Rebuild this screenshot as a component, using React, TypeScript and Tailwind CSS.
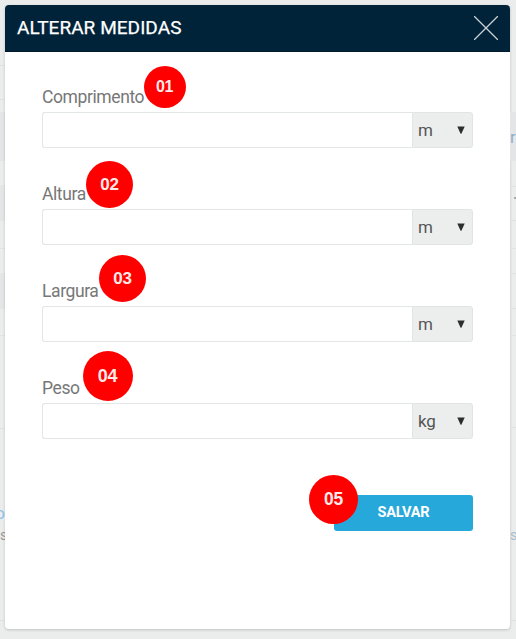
import React, { useState } from 'react';
import clsx from 'clsx';

interface Measure {
  id: string;
  label: string;
  unit: string;
  units: string[];
  step: string;
  badgeClass: string;
}

const LENGTH_UNITS = ['m', 'cm', 'mm'];
const WEIGHT_UNITS = ['kg', 'g'];

const measures: Measure[] = [
  { id: 'comprimento', label: 'Comprimento', unit: 'm', units: LENGTH_UNITS, step: '01', badgeClass: 'left-[101.5px] -top-[19.5px] size-[42px] text-[16px]' },
  { id: 'altura', label: 'Altura', unit: 'm', units: LENGTH_UNITS, step: '02', badgeClass: 'left-[44px] -top-[21px] size-[47px] text-[17px]' },
  { id: 'largura', label: 'Largura', unit: 'm', units: LENGTH_UNITS, step: '03', badgeClass: 'left-[57px] -top-[24px] size-[47px] text-[17px]' },
  { id: 'peso', label: 'Peso', unit: 'kg', units: WEIGHT_UNITS, step: '04', badgeClass: 'left-[40.5px] -top-[25.5px] size-[50px] text-[18px]' },
];

function StepBadge({ step, className }: { step: string; className: string }) {
  return (
    <span
      className={clsx(
        'absolute z-10 flex items-center justify-center rounded-full bg-[#fe0000] font-["Liberation_Sans",sans-serif] leading-none font-bold tracking-[-0.3px] text-[#ffe9e9]',
        className
      )}
    >
      {step}
    </span>
  );
}

function MeasureField({ measure }: { measure: Measure }) {
  const [value, setValue] = useState('');
  const [unit, setUnit] = useState(measure.unit);

  return (
    <div className="relative">
      <label htmlFor={measure.id} className="block h-[27px] text-[17.5px] leading-[25px] tracking-[-0.4px] text-[#777]">
        {measure.label}
      </label>
      <StepBadge step={measure.step} className={measure.badgeClass} />
      <div className="flex h-9">
        <input
          id={measure.id}
          value={value}
          onChange={e => setValue(e.target.value)}
          className="min-w-0 flex-1 rounded-l-[3px] border border-r-0 border-[#e2e6e6] bg-white px-2 text-[#555] outline-none"
        />
        <div className="relative w-[61px]">
          <select
            value={unit}
            onChange={e => setUnit(e.target.value)}
            className="h-full w-full appearance-none rounded-r-[3px] border border-[#e0e4e4] bg-[#eceeee] pt-px pl-[5px] text-[17px] tracking-[-0.2px] text-[#555] outline-none"
          >
            {measure.units.map(u => (
              <option key={u}>{u}</option>
            ))}
          </select>
          <svg viewBox="0 0 8 8" className="pointer-events-none absolute top-[14px] right-[8px] size-2 fill-[#2d2d2d]">
            <path d="M0.3 0.5h7.4L4.4 7.8H3.6z" />
          </svg>
        </div>
      </div>
    </div>
  );
}

// Slices of the page that stay visible on each side of the dialog
function LeftBackdrop() {
  return (
    <div className="w-[5px] overflow-hidden">
      <div className="h-[66px] border-b border-[#e0e2e2]" />
      <div className="h-[34px] border-b border-[#e0e2e2]" />
      <div className="h-3" />
      <div className="h-[49px] bg-[#e3e5e7]" />
      <div className="h-6" />
      <div className="h-9 bg-[#e3e5e7]" />
      <div className="h-[28px] border-b border-[#e2e4e4]" />
      <div className="h-6" />
      <div className="h-9 bg-[#e3e5e7]" />
      <div className="h-[27px] border-b border-[#e2e4e4]" />
      <div className="h-[93px] border-b border-[#dfe1e1]" />
      <div className="flex h-[192px] flex-col items-end border-b border-[#dfe1e1] pt-[74px]">
        <span className="text-[17px] leading-[20px] text-[#8fc3ea]">o</span>
        <span className="mt-[3px] w-[5px] text-[14px] leading-[18px] text-[#999]">s</span>
      </div>
    </div>
  );
}

function RightBackdrop() {
  return (
    <div className="w-[6px] overflow-hidden">
      <div className="h-[112px]" />
      <div className="h-[49px] bg-[#e3e5e7] pt-[13px] text-[17px] leading-[24px] text-[#8fb0cc]">r</div>
      <div className="h-[26px] border-b border-[#e0e2e2]" />
      <div className="flex h-[34px] justify-end border-b border-[#e0e2e2] pt-[10px]">
        <div className="h-[2px] w-[2px] bg-[#aaa]" />
      </div>
      <div className="h-[28px] border-b border-[#e2e4e4]" />
      <div className="h-[25px] border-b border-[#e0e2e2]" />
      <div className="h-[35px] border-b border-[#e0e2e2]" />
      <div className="h-[27px] border-b border-[#e2e4e4]" />
      <div className="h-[92px] border-b border-[#dfe1e1]" />
      <div className="h-[193px] border-b border-[#dfe1e1] pt-[96px] text-[14px] leading-[22px] text-[#aabccc]">s</div>
    </div>
  );
}

export default function App() {
  return (
    <div className="flex h-[639px] w-[516px] overflow-hidden bg-[#ebecec] font-[Roboto,sans-serif]">
      <LeftBackdrop />
      <div className="flex flex-1 flex-col bg-[#ebecec] pt-[5px] pb-[10px]">
        <div role="dialog" className="flex flex-1 flex-col rounded-[4px] bg-white shadow-[0_1px_3px_rgba(0,0,0,0.18)]">
          <header className="flex h-[47px] items-center justify-between rounded-t-[4px] border-b border-[#001a2e] bg-[#002339] px-3">
            <h1 className="text-[19px] leading-6 tracking-[0.05px] text-white [-webkit-text-stroke:0.25px_white]">ALTERAR MEDIDAS</h1>
            <button type="button" aria-label="Fechar">
              <svg viewBox="0 0 24 24" className="size-6 fill-none stroke-[#c9d0d6] stroke-[1.3]">
                <path d="M0 0L24 24M24 0L0 24" />
              </svg>
            </button>
          </header>

          <form className="flex flex-col px-[37px] pt-[33px]" onSubmit={e => e.preventDefault()}>
            <div className="flex flex-col gap-[34px]">
              {measures.map(measure => (
                <MeasureField key={measure.id} measure={measure} />
              ))}
            </div>
            <div className="relative mt-14 flex justify-end">
              <StepBadge step="05" className="-top-5 left-[267px] size-[49px] text-[17.5px]" />
              <button type="submit" className="h-9 w-[139px] rounded-[3px] bg-[#27a8db] text-[14.5px] font-bold tracking-[-0.2px] text-white">
                SALVAR
              </button>
            </div>
          </form>
        </div>
      </div>
      <RightBackdrop />
    </div>
  );
}
